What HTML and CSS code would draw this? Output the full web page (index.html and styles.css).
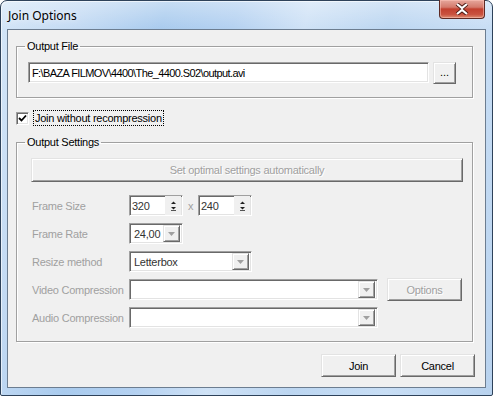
FILE: index.html
```html
<!DOCTYPE html>
<html lang="en">
<head>
    <meta charset="UTF-8" />
    <title>Join Options</title>
    <link rel="stylesheet" href="styles.css">
</head>
<body>
    <div class="window">
        <div class="titlebar">
            <span class="title">Join Options</span>
            <div class="close-btn">
                <svg width="16" height="12" viewBox="0 0 16 12">
                    <path d="M3 1 L8 5 L13 1 M3 11 L8 7 L13 11" stroke="#4a1a14" stroke-width="4" fill="none" />
                    <path d="M3 1 L8 5 L13 1 M3 11 L8 7 L13 11" stroke="#fff" stroke-width="2.2" fill="none" />
                </svg>
            </div>
        </div>
        <div class="client">
            <fieldset class="group group-file">
                <legend>Output File</legend>
                <div class="file-row">
                    <div class="sunken edit file-edit">F:\BAZA FILMOV\4400\The_4400.S02\output.avi</div>
                    <div class="btn browse-btn">...</div>
                </div>
            </fieldset>

            <div class="check-row">
                <span class="checkbox">
                    <svg width="9" height="9" viewBox="0 0 9 9">
                        <path d="M1 4 L3.5 6.5 L8 1.5" stroke="#000" stroke-width="1.8" fill="none" />
                    </svg>
                </span>
                <span class="check-label">Join without recompression</span>
            </div>

            <fieldset class="group group-settings">
                <legend>Output Settings</legend>
                <div class="btn disabled auto-btn">Set optimal settings automatically</div>

                <div class="settings-grid">
                    <div class="field-label">Frame Size</div>
                    <div class="ctrl-row">
                        <div class="sunken spin">
                            <span class="edit-text">320</span>
                            <span class="spin-btns">
                                <svg width="9" height="15" viewBox="0 0 9 15">
                                    <path d="M2 6 L4.5 3.5 L7 6 Z" fill="#222" />
                                    <path d="M2 9 L4.5 11.5 L7 9 Z" fill="#222" />
                                    <path d="M2 12.5 H7" stroke="#555" stroke-width="1" />
                                </svg>
                            </span>
                        </div>
                        <span class="times">x</span>
                        <div class="sunken spin">
                            <span class="edit-text">240</span>
                            <span class="spin-btns">
                                <svg width="9" height="15" viewBox="0 0 9 15">
                                    <path d="M2 6 L4.5 3.5 L7 6 Z" fill="#222" />
                                    <path d="M2 9 L4.5 11.5 L7 9 Z" fill="#222" />
                                    <path d="M2 12.5 H7" stroke="#555" stroke-width="1" />
                                </svg>
                            </span>
                        </div>
                    </div>

                    <div class="field-label">Frame Rate</div>
                    <div class="ctrl-row">
                        <div class="sunken combo combo-small">
                            <span class="edit-text">24,00</span>
                            <span class="combo-btn">
                                <svg width="7" height="4" viewBox="0 0 7 4"><path d="M0 0 H7 L3.5 4 Z" fill="#a0a0a0" /></svg>
                            </span>
                        </div>
                    </div>

                    <div class="field-label">Resize method</div>
                    <div class="ctrl-row">
                        <div class="sunken combo combo-mid">
                            <span class="edit-text">Letterbox</span>
                            <span class="combo-btn">
                                <svg width="7" height="4" viewBox="0 0 7 4"><path d="M0 0 H7 L3.5 4 Z" fill="#a0a0a0" /></svg>
                            </span>
                        </div>
                    </div>

                    <div class="field-label">Video Compression</div>
                    <div class="ctrl-row">
                        <div class="sunken combo combo-wide">
                            <span class="edit-text"></span>
                            <span class="combo-btn">
                                <svg width="7" height="4" viewBox="0 0 7 4"><path d="M0 0 H7 L3.5 4 Z" fill="#a0a0a0" /></svg>
                            </span>
                        </div>
                        <div class="btn disabled options-btn">Options</div>
                    </div>

                    <div class="field-label">Audio Compression</div>
                    <div class="ctrl-row">
                        <div class="sunken combo combo-wide">
                            <span class="edit-text"></span>
                            <span class="combo-btn">
                                <svg width="7" height="4" viewBox="0 0 7 4"><path d="M0 0 H7 L3.5 4 Z" fill="#a0a0a0" /></svg>
                            </span>
                        </div>
                    </div>
                </div>
            </fieldset>

            <div class="dialog-buttons">
                <div class="btn dialog-btn">Join</div>
                <div class="btn dialog-btn">Cancel</div>
            </div>
        </div>
    </div>
</body>
</html>
```

FILE: styles.css
```css
* {
    box-sizing: border-box;
}

body {
    margin: 0;
    background: #fff;
    font-family: "Liberation Sans", Arial, sans-serif;
    font-size: 11px;
    letter-spacing: -0.25px;
    color: #000;
}

.window {
    width: 493px;
    height: 396px;
    border: 1px solid #2e425a;
    border-radius: 7px 7px 2px 2px;
    padding: 0 6px 7px 6px;
    display: flex;
    flex-direction: column;
    background:
        linear-gradient(to bottom, rgba(255, 255, 255, 0.35), rgba(255, 255, 255, 0) 28px),
        linear-gradient(105deg, #d4e6f8 0%, #c3daf3 14%, #a9cbee 28%, #b4d1f1 40%, #cfe2f6 52%, #bcd6f1 66%, #c8def5 82%, #b8d2ee 100%);
    box-shadow: inset 1px 1px 0 rgba(255, 255, 255, 0.6);
}

.titlebar {
    height: 28px;
    display: flex;
    justify-content: space-between;
    align-items: center;
    padding-left: 1px;
}

.title {
    font-family: "Noto Sans", "Open Sans", sans-serif;
    font-size: 12px;
    letter-spacing: 0;
    color: #000;
    text-shadow: 0 0 6px rgba(255, 255, 255, 0.9);
    padding-top: 1px;
}

.close-btn {
    align-self: flex-start;
    width: 46px;
    height: 19px;
    margin-top: -1px;
    margin-right: 1px;
    border: 1px solid #5e2a24;
    border-top: none;
    border-radius: 0 0 4px 4px;
    background: linear-gradient(to bottom, #e6a79c 0%, #d47a6c 40%, #c2402f 50%, #c9523f 80%, #dc8d72 100%);
    box-shadow: inset 0 0 0 1px rgba(255, 200, 190, 0.5);
    display: flex;
    justify-content: center;
    align-items: center;
}

.client {
    flex: 1;
    background: #f0f0f0;
    border: 1px solid #6c7d90;
    padding: 10px 10px 0 8px;
    display: flex;
    flex-direction: column;
}

/* group boxes */
.group {
    margin: 0;
    width: 457px;
    border: 1px solid #a0a0a0;
    box-shadow: 1px 1px 0 #fff, inset 1px 1px 0 #fff;
    min-width: 0;
}

.group legend {
    padding: 0 2px;
    line-height: 13px;
}

.group-file {
    padding: 9px 16px 13px 11px;
}

.group-file legend {
    margin-left: -3px;
}

.group-settings {
    margin-top: 10px;
    padding: 9px 9px 13px 14px;
}

.group-settings legend {
    margin-left: -6px;
}

.file-row {
    display: flex;
    align-items: flex-start;
    gap: 4px;
}

/* 3d borders */
.sunken {
    border: 1px solid;
    border-color: #a0a0a0 #fff #fff #a0a0a0;
    box-shadow: inset 1px 1px 0 #696969, inset -1px -1px 0 #e3e3e3;
    background: #fff;
}

.btn {
    border: 1px solid;
    border-color: #e3e3e3 #696969 #696969 #e3e3e3;
    box-shadow: inset 1px 1px 0 #fff, inset -1px -1px 0 #a0a0a0;
    background: #f0f0f0;
    display: flex;
    justify-content: center;
    align-items: center;
}

.btn.disabled {
    color: #a0a0a0;
    text-shadow: 1px 1px 0 #fff;
}

.edit {
    height: 21px;
    display: flex;
    align-items: center;
    padding: 0 3px;
}

.file-edit {
    width: 401px;
    white-space: nowrap;
    overflow: hidden;
    letter-spacing: -0.6px;
}

.browse-btn {
    width: 23px;
    height: 22px;
    padding-bottom: 2px;
    letter-spacing: 0;
}

/* checkbox */
.check-row {
    margin-top: 12px;
    height: 16px;
    display: flex;
    align-items: center;
    gap: 4px;
}

.checkbox {
    width: 13px;
    height: 13px;
    border: 1px solid;
    border-color: #a0a0a0 #fff #fff #a0a0a0;
    box-shadow: inset 1px 1px 0 #696969, inset -1px -1px 0 #e3e3e3;
    background: #fff;
    display: flex;
    justify-content: center;
    align-items: center;
}

.check-label {
    border: 1px dotted #000;
    padding: 0 1px;
    line-height: 14px;
}

.auto-btn {
    height: 24px;
}

/* settings rows */
.settings-grid {
    margin-top: 13px;
    display: grid;
    grid-template-columns: 98px 1fr;
    grid-auto-rows: 21px;
    row-gap: 7px;
}

.field-label {
    color: #a0a0a0;
    padding-left: 1px;
    display: flex;
    align-items: center;
    white-space: nowrap;
}

.ctrl-row {
    display: flex;
    align-items: center;
}

.edit-text {
    flex: 1;
    padding-left: 2px;
    color: #333;
    white-space: nowrap;
}

.spin {
    width: 54px;
    height: 21px;
    display: flex;
    align-items: center;
}

.spin-btns {
    width: 16px;
    height: 19px;
    background: #f0f0f0;
    display: flex;
    justify-content: center;
    align-items: center;
    margin-right: 1px;
}

.times {
    width: 15px;
    text-align: center;
    color: #a0a0a0;
}

.combo {
    height: 21px;
    display: flex;
    align-items: center;
    padding: 2px;
}

.combo-small {
    width: 54px;
}

.combo-mid {
    width: 123px;
}

.combo-wide {
    width: 249px;
}

.combo-btn {
    width: 17px;
    height: 17px;
    border: 1px solid;
    border-color: #e3e3e3 #696969 #696969 #e3e3e3;
    box-shadow: inset 1px 1px 0 #fff, inset -1px -1px 0 #a0a0a0;
    background: #f0f0f0;
    display: flex;
    justify-content: center;
    align-items: center;
}

.options-btn {
    margin-left: 9px;
    width: 75px;
    height: 23px;
}

/* bottom buttons */
.dialog-buttons {
    margin-top: 12px;
    display: flex;
    justify-content: flex-end;
    gap: 4px;
}

.dialog-btn {
    width: 75px;
    height: 23px;
}
```
